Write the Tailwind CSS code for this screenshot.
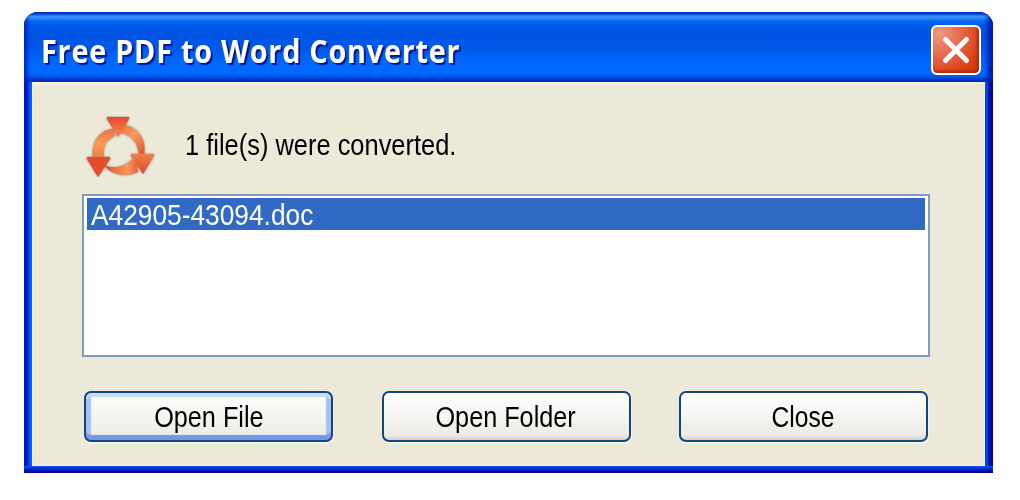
<!DOCTYPE html>
<html lang="en">
<head>
  <meta charset="UTF-8" />
  <meta name="viewport" content="width=device-width, initial-scale=1.0" />
  <title>Free PDF to Word Converter</title>
  <script src="https://cdn.jsdelivr.net/npm/@tailwindcss/browser@4"></script>
</head>
<body class="h-[500px] overflow-hidden bg-white pl-6 pt-3 font-['Liberation_Sans',Arial,sans-serif] text-black">

  <!-- Window -->
  <div class="flex h-[461px] w-[969px] flex-col overflow-hidden rounded-t-[14px] bg-[linear-gradient(to_right,#0012c4_0,#0018d0_3px,#0b5cf0_6px,#0b5cf0_50%,#0648e6_963px,#0012b0_965px,#00008c_969px)]">

    <!-- Title bar -->
    <header class="flex h-[70px] shrink-0 items-center justify-between bg-[linear-gradient(to_bottom,#0848cc_0,#0a5ae0_2px,#3c96ff_4px,#2f88fa_6px,#0868f4_9px,#0058e8_14px,#0054e2_24px,#0058ea_36px,#0068ff_50px,#0069ff_61px,#0054e8_65px,#0038c8_69px,#3060c8_70px)] pl-[17px] pr-3 pt-[5px] shadow-[inset_3px_0_4px_#0020c0,inset_-5px_0_5px_#0018a8]">
      <h1 class="mt-[3px] origin-left scale-x-[0.9] whitespace-nowrap font-['Open_Sans',sans-serif] text-[32px] font-bold leading-10 tracking-[0.85px] text-white [text-shadow:2px_2px_1px_#0a1883]">Free PDF to Word Converter</h1>
      <button class="flex size-[50px] items-center justify-center rounded-[6px] border-2 border-white bg-[radial-gradient(circle_at_15%_15%,#ee9a80_0,#e4684a_40%,#dc4014_75%,#cc3800_100%)] shadow-[inset_-2px_-2px_3px_#a82c08]">
        <svg class="size-[30px]" viewBox="0 0 30 30" fill="none" stroke="#fff" stroke-width="5" stroke-linecap="round">
          <path d="M4.500 4.500 25.500 25.500M25.500 4.500 4.500 25.500" />
        </svg>
      </button>
    </header>

    <!-- Content -->
    <main class="ml-2 mr-2 h-[384px] shrink-0 border border-t-2 border-[#fbf0d4] bg-[#ece9d8] pl-[49px] pt-[30px]">
      <div class="flex h-[80px] items-start">
        <svg class="h-[66px] w-[74px] shrink-0 drop-shadow-[0_0_1px_#777]" viewBox="0 0 74 66">
          <defs>
            <linearGradient id="top" x1="0" y1="0" x2="0" y2="1"><stop offset="0" stop-color="#e8482a" /><stop offset="1" stop-color="#f68a50" /></linearGradient>
            <linearGradient id="left" x1="0" y1="0" x2="0" y2="1"><stop offset="0" stop-color="#ee7044" /><stop offset=".5" stop-color="#f99b5b" /><stop offset="1" stop-color="#f07a45" /></linearGradient>
            <linearGradient id="right" x1="0" y1="0" x2="1" y2="1"><stop offset="0" stop-color="#ef6b3e" /><stop offset=".45" stop-color="#f99b5b" /><stop offset="1" stop-color="#e4512e" /></linearGradient>
            <linearGradient id="bottom"><stop offset="0" stop-color="#e44d2b" /><stop offset=".7" stop-color="#f8985a" /><stop offset="1" stop-color="#ec6038" /></linearGradient>
            <linearGradient id="arrow" x1="0" y1="0" x2="0" y2="1"><stop offset="0" stop-color="#f27f48" /><stop offset="1" stop-color="#e5482a" /></linearGradient>
          </defs>
          <path fill="url(#left)" d="M31 15C17 16 9 29 11 44H22C20 34 24 26 33 22Z" />
          <path fill="url(#right)" d="M42 11C56 13 65 26 62 41H57C56 29 50 20 37 19Z" />
          <path fill="url(#bottom)" d="M22 51C31 55 42 54 49 46H54L56 58C45 63 30 62 22 51Z" />
          <path fill="url(#top)" d="M25 3H47V5L36 23 25 5Z" />
          <path fill="#e54c2b" d="M5 43H28V45L16 63 5 45Z" />
          <path fill="url(#arrow)" d="M49 40H72V42L61 60 49 42Z" />
        </svg>
        <p class="ml-[29px] mt-[13px] origin-left scale-x-[0.877] whitespace-nowrap text-[29px] leading-9">1 file(s) were converted.</p>
      </div>

      <ul class="h-[163px] w-[848px] border-2 border-[#7f9db9] bg-white px-[3px] pt-[2px]">
        <li class="h-8 bg-[#316ac5] pl-1 text-white">
          <span class="inline-block origin-left scale-x-[0.907] whitespace-nowrap text-[29px] leading-[34px]">A42905-43094.doc</span>
        </li>
      </ul>

      <div class="ml-[2px] mt-[34px] flex w-[844px] justify-between">
        <button class="h-[51px] w-[249px] rounded-[7px] border-2 border-[#104780] bg-[linear-gradient(to_bottom,#fdfdfb,#f2f2ee_60%,#ecebe5)] pt-[2px] text-[29px] shadow-[inset_0_4px_1px_#c4dbfb,inset_0_-5px_1px_#7596e4,inset_5px_0_1px_#a6c2f2,inset_-5px_0_1px_#a6c2f2,1px_2px_1px_#f7f4e8]"><span class="inline-block scale-x-[0.87]">Open File</span></button>
        <button class="h-[51px] w-[249px] rounded-[7px] border-2 border-[#104780] bg-[linear-gradient(to_bottom,#fff,#f2f2ee_60%,#ecebe5_90%,#d8d0c4)] pt-[2px] text-[29px] shadow-[1px_2px_1px_#f7f4e8]"><span class="inline-block scale-x-[0.87]">Open Folder</span></button>
        <button class="h-[51px] w-[249px] rounded-[7px] border-2 border-[#104780] bg-[linear-gradient(to_bottom,#fff,#f2f2ee_60%,#ecebe5_90%,#d8d0c4)] pt-[2px] text-[29px] shadow-[1px_2px_1px_#f7f4e8]"><span class="inline-block scale-x-[0.85]">Close</span></button>
      </div>
    </main>

    <!-- Bottom frame -->
    <div class="h-[7px] shrink-0 bg-[linear-gradient(to_bottom,#1454ee,#0030d8_35%,#0010a8_65%,#000088)]"></div>
  </div>

</body>
</html>
